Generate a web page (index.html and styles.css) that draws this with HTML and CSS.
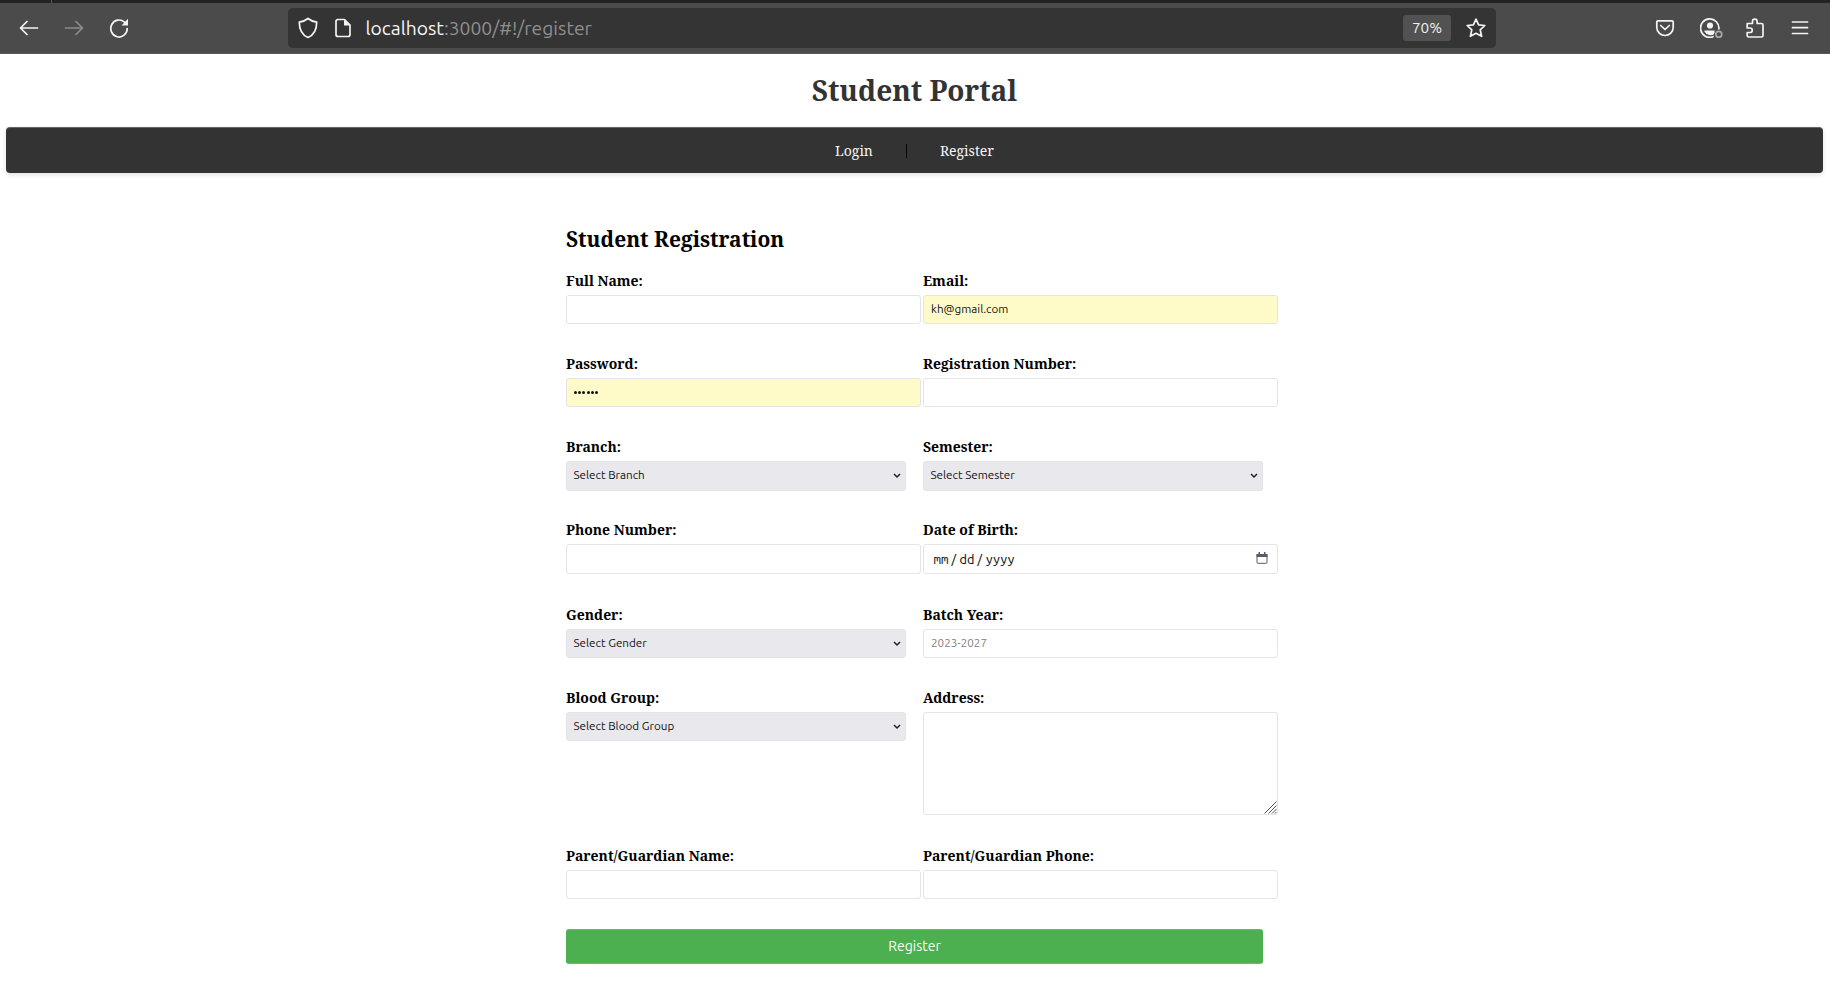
FILE: index.html
```html
<!DOCTYPE html>
<html lang="en">
<head>
<meta charset="utf-8">
<title>Student Portal</title>
<link rel="stylesheet" href="styles.css">
</head>
<body>
<div class="tabstrip"><span class="tab-edge"></span></div>
<header class="toolbar">
  <div class="nav-icons">
    <svg class="icon" viewBox="0 0 20 20"><path d="M18.500 10H2M8 3.500L1.500 10L8 16.500"/></svg>
    <svg class="icon dim" viewBox="0 0 20 20"><path d="M1.500 10H18M12 3.500L18.500 10L12 16.500"/></svg>
    <svg class="icon" viewBox="0 0 20 20"><path d="M15.500 4.200A8.200 8.500 0 1 0 18.200 10.500"/><path class="solid" d="M19 .8V7.500H12.500Z"/></svg>
  </div>
  <div class="urlbar">
    <svg class="icon shield" viewBox="0 0 20 22"><path d="M10 1.500C12 3.200 15.500 4.500 18.700 5.200C18.700 11.500 17 17.500 10 20.500C3 17.500 1.300 11.500 1.300 5.200C4.500 4.500 8 3.200 10 1.500Z"/></svg>
    <svg class="icon doc" viewBox="0 0 20 20"><path d="M4.500 1.500H11.500L17 7V16.500Q17 18.500 15 18.500H5Q3 18.500 3 16.500V3.500Q3 1.500 5 1.500Z"/><path class="solid" d="M11 1.500L17 7.500H11Z"/></svg>
    <span class="url"><b>localhost</b>:3000/#!/register</span>
    <span class="zoom">70%</span>
    <svg class="icon star" viewBox="0 0 20 20"><path d="M10 1.200L12.600 6.800L18.800 7.500L14.200 11.800L15.600 18.300L10 15.300L4.400 18.300L5.800 11.800L1.200 7.500L7.400 6.800Z"/></svg>
  </div>
  <div class="tools">
    <svg class="icon" viewBox="0 0 20 20"><path d="M3 2.800H17Q18.200 2.800 18.200 4V9.500A8.200 8 0 0 1 1.800 9.500V4Q1.800 2.800 3 2.800ZM5.700 7.500L10 11.500L14.300 7.500"/></svg>
    <svg class="icon account" viewBox="0 0 24 20"><path d="M13 18.700A9.200 9.200 0 1 1 18.900 11"/><circle class="solid" cx="10" cy="7.500" r="3.100"/><path class="solid" d="M4.500 12.500H14.500V14.500L13.500 16.800Q8 18.500 4.500 13.500Z"/><circle class="badge" cx="18.800" cy="16.300" r="3"/></svg>
    <svg class="icon puzzle" viewBox="0 0 20 20"><path d="M2.200 5.500H7.500V3.500A2.300 2.300 0 0 1 12.100 3.500V5.500H16.500Q18 5.500 18 7V17.500Q18 19 16.500 19H3.700Q2.200 19 2.200 17.500V14.500H5A2.200 2.200 0 0 0 5 10H2.200Z"/></svg>
    <svg class="icon" viewBox="0 0 20 20"><path d="M2.500 4H17.500M2.500 9.700H17.500M2.500 15.500H17.500"/></svg>
  </div>
</header>
<main class="page">
  <h1 class="title"><span>Student Portal</span></h1>
  <nav class="menu"><a class="login">Login</a><span class="divider"></span><a class="reg">Register</a></nav>
  <section class="registration">
    <h2 class="heading"><span>Student Registration</span></h2>
    <form class="fields">
      <div class="field"><label>Full Name:</label><div class="control"></div></div>
      <div class="field"><label>Email:</label><div class="control filled"><span>kh@gmail.com</span></div></div>
      <div class="field"><label>Password:</label><div class="control filled"><span class="dots"><i></i><i></i><i></i><i></i><i></i><i></i></span></div></div>
      <div class="field"><label>Registration Number:</label><div class="control"></div></div>
      <div class="field"><label>Branch:</label><div class="control select"><span>Select Branch</span><svg class="chevron" viewBox="0 0 8 6"><path d="M1 1L4 4L7 1"/></svg></div></div>
      <div class="field"><label>Semester:</label><div class="control select"><span>Select Semester</span><svg class="chevron" viewBox="0 0 8 6"><path d="M1 1L4 4L7 1"/></svg></div></div>
      <div class="field"><label>Phone Number:</label><div class="control tall"></div></div>
      <div class="field"><label>Date of Birth:</label><div class="control date"><span class="pair">mm</span><span class="slash">/</span><span class="pair">dd</span><span class="slash">/</span><span>yyyy</span><svg class="calendar" viewBox="0 0 12 12"><path d="M1 2.500H11V10.500Q11 11.300 10.200 11.300H1.800Q1 11.300 1 10.500Z"/><path class="solid" d="M.5 2H11.500V5H.5ZM2.500 0H4V3H2.500ZM8 0H9.500V3H8Z"/></svg></div></div>
      <div class="field lowered"><label>Gender:</label><div class="control select short"><span>Select Gender</span><svg class="chevron" viewBox="0 0 8 6"><path d="M1 1L4 4L7 1"/></svg></div></div>
      <div class="field lowered"><label>Batch Year:</label><div class="control"><span class="placeholder">2023-2027</span></div></div>
      <div class="field"><label>Blood Group:</label><div class="control select short"><span>Select Blood Group</span><svg class="chevron" viewBox="0 0 8 6"><path d="M1 1L4 4L7 1"/></svg></div></div>
      <div class="field"><label>Address:</label><div class="control area"><svg class="grip" viewBox="0 0 13 13"><path d="M.5 12.500L12.500 .5M4.500 12.500L12.500 4.500M8 12.500L12.500 8M11 12.500L12.500 11"/></svg></div></div>
      <div class="field"><label>Parent/Guardian Name:</label><div class="control"></div></div>
      <div class="field"><label>Parent/Guardian Phone:</label><div class="control"></div></div>
    </form>
    <div class="submit"><span>Register</span></div>
  </section>
</main>
</body>
</html>
```
FILE: styles.css
```css
* { box-sizing: border-box; }
body { margin: 0; width: 1830px; height: 987px; overflow: hidden; background: #fff; color: #000; font-family: "Noto Serif", "Droid Serif", "DejaVu Serif Condensed", "DejaVu Serif", serif; }
.tabstrip { height: 3px; background: #222; padding-left: 51px; display: flex; }
.tab-edge { width: 1px; background: #555; }
.toolbar { height: 51px; background: #4b4b4b; border-bottom: 1px solid #5b5b5d; display: flex; padding: 5px 20px 0 19px; font-family: Ubuntu, "Noto Sans", sans-serif; }
.icon { width: 20px; height: 20px; fill: none; stroke: #f4f4f4; stroke-width: 1.7; stroke-linecap: round; stroke-linejoin: round; flex: none; }
.icon .solid { fill: #f4f4f4; stroke: none; }
.icon.dim { stroke: #8c8c8c; }
.nav-icons { width: 269px; height: 40px; display: flex; gap: 25px; align-items: center; }
.urlbar { width: 1208px; height: 40px; background: #343434; border-radius: 5px; display: flex; align-items: center; padding: 0 10px; }
.icon.shield { height: 22px; }
.icon.doc { margin-left: 15px; }
.url { color: #8f8f8f; font-size: 19.3px; line-height: 40px; margin-left: 12.5px; flex: 1; white-space: nowrap; }
.url b { color: #f6f6f6; font-weight: 400; }
.zoom { width: 48px; height: 26px; border-radius: 3px; background: #525252; color: #eee; font-size: 15.3px; line-height: 26px; text-align: center; margin-right: 15px; }
.tools { display: flex; flex: 1; gap: 25px; height: 40px; align-items: center; justify-content: flex-end; }
.icon.account { width: 24px; margin-right: -4px; }
.icon .badge { stroke: #aaa; }
.page { padding: 0 7px 0 6px; }
.title { margin: 0; height: 73px; padding-top: 16px; font-size: 28px; line-height: 40px; text-align: center; color: #333; }
.menu { height: 46px; background: #333; border-top: 1px solid #666; border-radius: 4px; box-shadow: 0 2px 5px rgba(0, 0, 0, .12); display: flex; justify-content: center; align-items: center; color: #f4f4f4; font-size: 14px; line-height: 20px; }
.divider { width: 1px; height: 14px; margin: 0 33px; background: #08080c; }
.registration { width: 712px; margin-left: 560px; padding-top: 50px; }
.heading { margin: 0; height: 50px; font-size: 20.95px; line-height: 32px; }
.fields { display: grid; grid-template-columns: 355px 355px; column-gap: 2px; grid-template-rows: 83px 83px 83px 84px 84px 158px 81px; }
.field { display: flex; flex-direction: column; }
.lowered { padding-top: 1px; }
.field label { height: 22px; line-height: 16px; font-size: 13.97px; font-weight: 700; white-space: nowrap; align-self: flex-start; }
.control { height: 29px; border: 1px solid #e4e4e6; border-radius: 3px; padding: 0 7px 1px; display: flex; align-items: center; font: 11.67px/26px Ubuntu, "Noto Sans", sans-serif; color: #111; white-space: nowrap; }
.filled { background: #fffbc8; }
.tall { height: 30px; }
.select { width: 340px; height: 30px; background: #e9e9ed; justify-content: space-between; padding: 0 4px 2px 6.5px; }
.short { height: 29px; }
.chevron { width: 8px; height: 6px; margin-top: 2px; fill: none; stroke: #222; stroke-width: 1.5; }
.dots { display: flex; gap: 1.2px; }
.dots i { width: 3px; height: 3px; border-radius: 50%; background: #111; }
.date { font-family: "Ubuntu Mono", "Noto Sans", sans-serif; font-size: 13.33px; height: 30px; padding: 1px 9px 0 9.5px; gap: 3px; color: #111; }
.pair { width: 13.5px; }
.slash { width: 6.5px; }
.date span:nth-of-type(5) { letter-spacing: -.2px; }
.calendar { width: 12px; height: 12px; fill: none; stroke: #5b5b66; stroke-width: 1; margin-left: auto; margin-bottom: 3px; }
.calendar .solid { fill: #5b5b66; stroke: none; }
.placeholder { color: #808080; }
.area { height: 103px; align-items: flex-end; justify-content: flex-end; padding: 0; }
.grip { width: 13px; height: 13px; fill: none; stroke: #555; }
.submit { width: 697px; height: 35px; border-radius: 3px; background: #4caf50; border-top: 1px solid #6abb6d; border-bottom: 1px solid #6abb6d; color: #f5fff5; text-align: center; font: 14px/33px Ubuntu, "Noto Sans", sans-serif; }
```
